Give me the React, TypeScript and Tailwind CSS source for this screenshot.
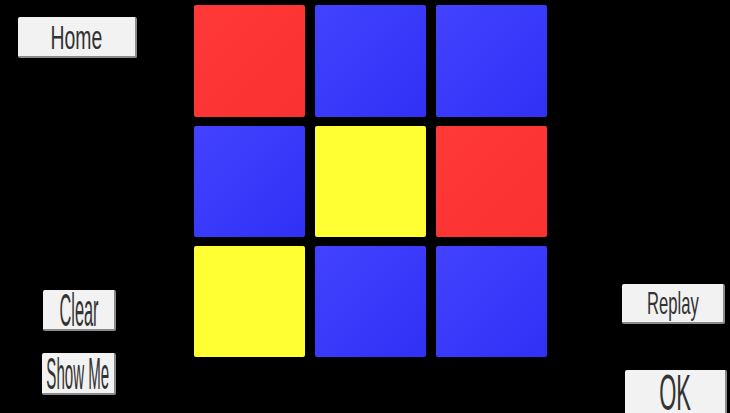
const cells = [
  'red', 'blue', 'blue',
  'blue', 'yellow', 'red',
  'yellow', 'blue', 'blue',
]

const cellClass: Record<string, string> = {
  red: 'bg-gradient-to-br from-[#ff3838] to-[#fa3131]',
  blue: 'bg-gradient-to-br from-[#4242ff] to-[#3030f6]',
  yellow: 'bg-[#ffff33]',
}

function GameButton({ label, className, textClass }: { label: string; className: string; textClass: string }) {
  return (
    <button className={`flex shrink-0 items-center justify-center rounded-[2px] border-b-2 border-r-2 border-[#8a8a8a] bg-[#f2f2f2] text-[#333] ${className}`}>
      <span className={`inline-block whitespace-nowrap leading-none ${textClass}`}>{label}</span>
    </button>
  )
}

export default function App() {
  return (
    <div className="flex h-[413px] w-[730px] overflow-hidden bg-black font-['Liberation_Sans',Arial,sans-serif]">
      {/* left controls */}
      <div className="flex w-[194px] shrink-0 flex-col">
        <GameButton
          label="Home"
          className="ml-[18px] mt-[17px] h-[41px] w-[119px]"
          textClass="text-[34px] scale-x-[0.57]"
        />
        <GameButton
          label="Clear"
          className="ml-[43px] mt-[232px] h-[41px] w-[73px]"
          textClass="text-[46px] scale-x-[0.355]"
        />
        <GameButton
          label="Show Me"
          className="ml-[42px] mt-[22px] h-[42px] w-[74px]"
          textClass="text-[45px] scale-x-[0.335]"
        />
      </div>

      {/* board */}
      <div className="mt-[5px] grid h-fit shrink-0 grid-cols-[111px_111px_111px] grid-rows-[112px_111px_111px] gap-x-[10px] gap-y-[9px]">
        {cells.map((c, i) => (
          <div key={i} className={`rounded-[2px] ${cellClass[c]}`} />
        ))}
      </div>

      {/* right controls */}
      <div className="flex flex-1 flex-col">
        <GameButton
          label="Replay"
          className="ml-[75px] mt-[284px] h-[40px] w-[103px]"
          textClass="text-[32px] scale-x-[0.52]"
        />
        <GameButton
          label="OK"
          className="ml-[78px] mt-[46px] h-[48px] w-[102px]"
          textClass="text-[50px] scale-x-[0.44]"
        />
      </div>
    </div>
  )
}
